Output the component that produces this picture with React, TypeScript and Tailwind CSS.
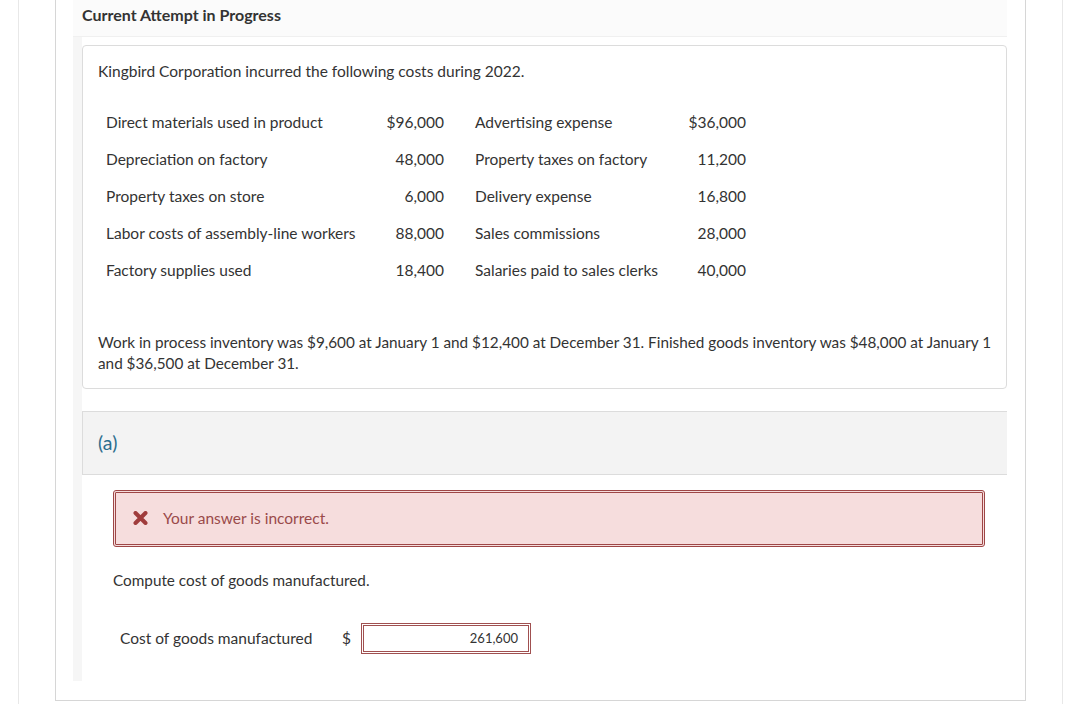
import React from "react";

const rows: [string, string, string, string][] = [
  ["Direct materials used in product", "$96,000", "Advertising expense", "$36,000"],
  ["Depreciation on factory", "48,000", "Property taxes on factory", "11,200"],
  ["Property taxes on store", "6,000", "Delivery expense", "16,800"],
  ["Labor costs of assembly-line workers", "88,000", "Sales commissions", "28,000"],
  ["Factory supplies used", "18,400", "Salaries paid to sales clerks", "40,000"],
];

export default function App() {
  return (
    <div
      className="w-[1080px] h-[704px] overflow-hidden bg-white text-[#333] text-[15.5px]"
      style={{ fontFamily: "Lato, 'Open Sans', sans-serif" }}
    >
      <div className="ml-[18px] w-[1045px] h-[704px] border-x border-[#e8e8e8] px-[36px]">
        <div className="w-[971px] h-[701px] border-x border-b border-[#d6d6d6] flex flex-col">
          <div className="ml-[17px] mr-[18px] flex flex-col">
            <div className="h-[37px] bg-[#fbfbfb] border-b border-[#f0f0f0] pl-[9px] flex items-center">
              <span className="font-bold text-[16px] -mt-[7px]">Current Attempt in Progress</span>
            </div>
            <div className="border-l-[9px] border-[#f6f6f6] h-[644px] pt-[8px] flex flex-col">
              {/* question card */}
              <div className="border border-[#dcdcdc] rounded-[4px] pt-[14px] pl-[15px] pb-[14px] pr-[2px]">
                <p className="leading-[22px]">Kingbird Corporation incurred the following costs during 2022.</p>
                <div className="mt-[22px] pl-[8px]">
                  {rows.map((r, i) => (
                    <div key={i} className="flex items-center h-[37px]">
                      <span className="w-[270px]">{r[0]}</span>
                      <span className="w-[68px] text-right">{r[1]}</span>
                      <span className="ml-[31px] w-[200px]">{r[2]}</span>
                      <span className="w-[71px] text-right">{r[3]}</span>
                    </div>
                  ))}
                </div>
                <p className="mt-[43px] leading-[21px] text-[15.3px]">
                  Work in process inventory was $9,600 at January 1 and $12,400 at December 31. Finished goods inventory was $48,000 at January 1 and $36,500 at December 31.
                </p>
              </div>
              {/* part a */}
              <div className="mt-[22px] h-[64px] bg-[#f3f3f3] border-y border-l border-[#dcdcdc] pl-[15px] flex items-center">
                <span className="text-[19.5px] text-[#2c6e8e] -mt-[1px]">(a)</span>
              </div>
              <div className="pl-[31px] pr-[22px]">
                <div className="mt-[15px] h-[57px] border-[3px] border-double border-[#9e4646] rounded-[3px] bg-[#f6dddd] flex items-center pl-[17px]">
                  <svg width="15" height="14" viewBox="0 0 15 14" className="mr-[15px] -mt-[1px]">
                    <path d="M2.5 2 L12.5 12 M12.5 2 L2.5 12" stroke="#a03c3c" strokeWidth="4" strokeLinecap="round" />
                  </svg>
                  <span className="text-[#9a4a4a] text-[15.5px]">Your answer is incorrect.</span>
                </div>
                <p className="mt-[22px] leading-[22px] text-[15.3px]">Compute cost of goods manufactured.</p>
                <div className="mt-[32px] flex items-center pl-[7px]">
                  <span className="w-[222px]">Cost of goods manufactured</span>
                  <span className="w-[19px]">$</span>
                  <div className="w-[170px] h-[31px] border-[3px] border-double border-[#a05050] flex items-center justify-end pr-[10px] text-[13px]">
                    261,600
                  </div>
                </div>
              </div>
            </div>
          </div>
        </div>
      </div>
    </div>
  );
}
